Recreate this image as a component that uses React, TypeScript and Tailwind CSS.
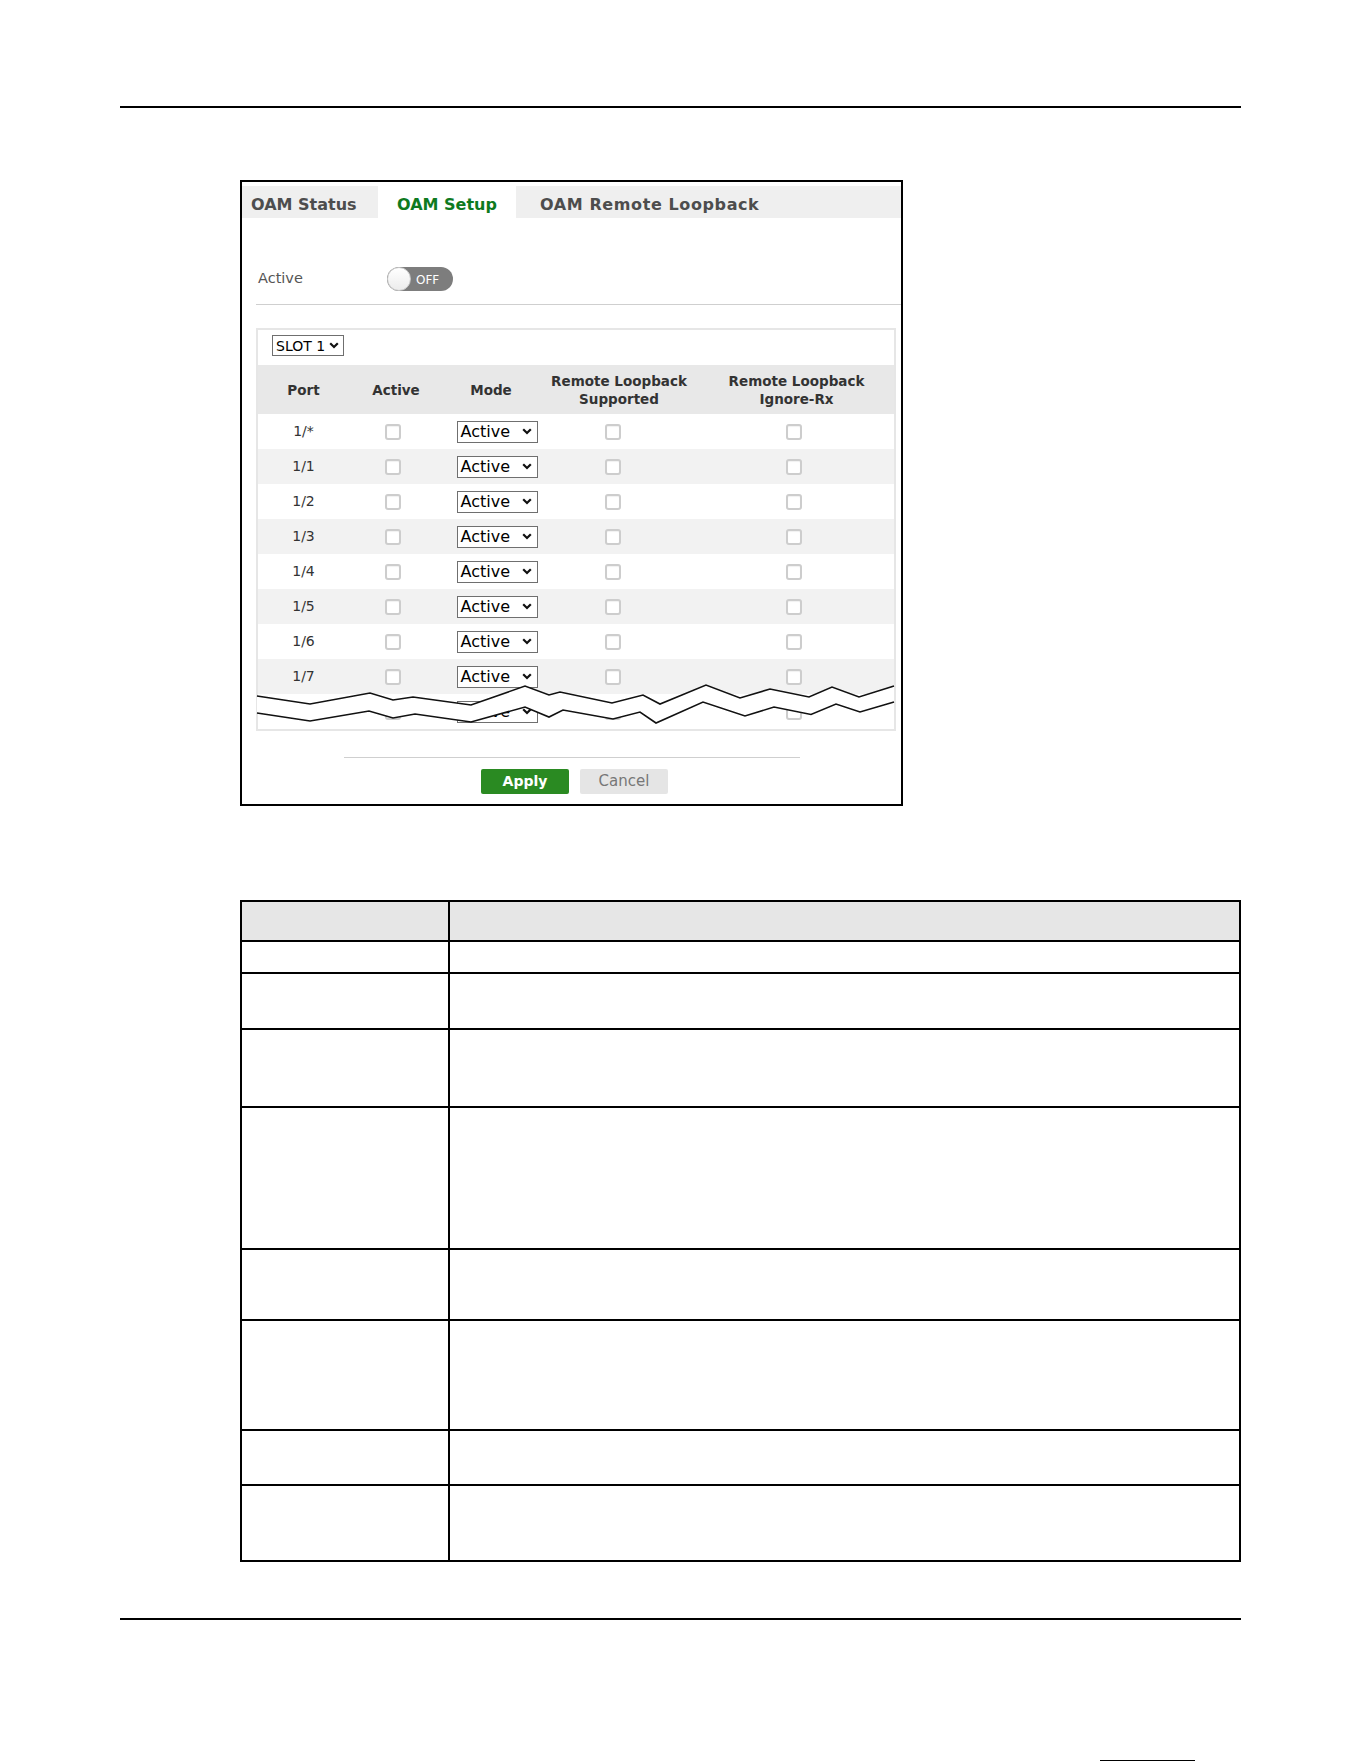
import React from 'react';

const UI_FONT = "font-['DejaVu_Sans',sans-serif]";

const PORTS = ['1/*', '1/1', '1/2', '1/3', '1/4', '1/5', '1/6', '1/7', '1/8'];

// 설명 표의 각 행 높이 (위쪽 테두리 포함)
const DESC_ROW_HEIGHTS = ['h-[32px]', 'h-[56px]', 'h-[78px]', 'h-[142px]', 'h-[71px]', 'h-[110px]', 'h-[55px]', 'h-[76px]'];

// 표가 잘려 나간 부분을 표시하는 지그재그 선 (페이지 좌표)
const BREAK_TOP: [number, number][] = [
  [257, 696], [310, 704], [370, 693], [393, 700], [413, 697], [471, 705], [525, 686], [549, 695],
  [560, 692], [612, 703], [643, 695], [660, 704], [706, 685], [740, 698], [770, 689], [809, 697],
  [832, 687], [859, 697], [894, 686],
];
const BREAK_BOTTOM: [number, number][] = [
  [257, 713], [310, 721], [369, 711], [393, 718], [415, 714], [471, 722], [525, 707], [549, 717],
  [563, 710], [613, 719], [640, 712], [656, 723], [703, 702], [745, 716], [774, 707], [811, 714.5],
  [836, 704], [860, 712], [894, 702],
];

const toPoints = (pts: [number, number][]) => pts.map(([x, y]) => `${x},${y}`).join(' ');

function Chevron() {
  return (
    <svg width="10" height="7" viewBox="0 0 10 7" className="shrink-0">
      <polyline points="1.2,1.2 5,5 8.8,1.2" fill="none" stroke="#111" strokeWidth="2.2" />
    </svg>
  );
}

function Checkbox() {
  return (
    <span className="block w-[16px] h-[16px] rounded-[3px] border-2 border-[#cdcdcd] bg-white shadow-[inset_0_1px_1px_rgba(0,0,0,0.06)]" />
  );
}

function ModeSelect() {
  return (
    <div className="flex items-center justify-between w-[81px] h-[22px] border border-[#6f6f6f] bg-white pl-[3px] pr-[5px]">
      <span className="text-[16px] leading-none text-black">Active</span>
      <Chevron />
    </div>
  );
}

function Toggle() {
  return (
    <div className="relative w-[66px] h-[24px] rounded-full bg-[#7d7d7d]">
      <span className="absolute left-0 top-0 w-[24px] h-[24px] rounded-full border border-[#c9c9c9] bg-gradient-to-b from-white to-[#ececec]" />
      <span className="absolute left-[29px] top-[1px] h-[24px] flex items-center text-[12px] text-white">OFF</span>
    </div>
  );
}

function PortTable() {
  return (
    <div className="relative ml-[14px] w-[640px] border-2 border-[#e6e6e6]">
      <div className="pt-[5px] pb-[9px] pl-[14px]">
        <div className="flex items-center justify-between w-[72px] h-[21px] border border-[#6f6f6f] bg-white pl-[3px] pr-[4px]">
          <span className="text-[14px] leading-none text-black">SLOT 1</span>
          <Chevron />
        </div>
      </div>

      <div className="grid grid-cols-[91px_88px_108px_148px_1fr] h-[49px] items-center bg-[#e8e8e8] text-[13.5px] font-bold leading-[18px] text-[#333] text-center">
        <span>Port</span>
        <span className="pl-[6px]">Active</span>
        <span>Mode</span>
        <span>
          Remote Loopback
          <br />
          Supported
        </span>
        <span className="pl-[6px]">
          Remote Loopback
          <br />
          Ignore-Rx
        </span>
      </div>

      {PORTS.map((port, i) => (
        <div
          key={port}
          className={`grid grid-cols-[91px_88px_108px_148px_1fr] h-[35px] items-center ${
            i % 2 === 1 ? 'bg-[#f2f2f2]' : 'bg-white'
          }`}
        >
          <span className="text-center text-[14px] text-[#333]">{port}</span>
          <span className="flex justify-center">
            <Checkbox />
          </span>
          <span className="flex justify-center pl-[12px]">
            <ModeSelect />
          </span>
          <span className="flex justify-center pr-[12px]">
            <Checkbox />
          </span>
          <span className="flex justify-center">
            <Checkbox />
          </span>
        </div>
      ))}

      <svg
        className="absolute left-[-2px] top-[-2px] pointer-events-none"
        width="640"
        height="403"
        viewBox="256 328 640 403"
      >
        <polygon points={`${toPoints(BREAK_TOP)} ${toPoints([...BREAK_BOTTOM].reverse())}`} fill="#fff" />
        <polyline points={toPoints(BREAK_TOP)} fill="none" stroke="#111" strokeWidth="1.6" />
        <polyline points={toPoints(BREAK_BOTTOM)} fill="none" stroke="#111" strokeWidth="1.6" />
      </svg>
    </div>
  );
}

function OamSetupPanel() {
  return (
    <div className={`ml-[240px] w-[663px] h-[626px] border-2 border-black bg-white pt-[4px] ${UI_FONT}`}>
      {/* 탭 */}
      <div className="flex h-[32px] bg-[#efefef] text-[16px] font-bold">
        <div className="w-[136px] flex items-center pt-[5px] pl-[9px] text-[#4d4d4d]">OAM Status</div>
        <div className="w-[138px] flex items-center justify-center pt-[5px] bg-white text-[#0e7a1f]">OAM Setup</div>
        <div className="flex items-center pt-[5px] pl-[24px] tracking-[0.6px] text-[#4d4d4d]">OAM Remote Loopback</div>
      </div>

      <div className="flex items-center mt-[49px] h-[24px] pl-[16px]">
        <span className="w-[129px] text-[14.5px] text-[#555]">Active</span>
        <Toggle />
      </div>

      <div className="mt-[13px] ml-[14px] h-px bg-[#cfcfcf]" />

      <div className="mt-[23px]">
        <PortTable />
      </div>

      <div className="mt-[26px] mx-auto w-[456px] h-px bg-[#cfcfcf]" />

      <div className="flex justify-center gap-[11px] mt-[11px] pl-[6px]">
        <button
          type="button"
          className="w-[88px] h-[25px] rounded-[2px] bg-[#2a8a22] text-[14px] font-bold text-white"
        >
          Apply
        </button>
        <button
          type="button"
          className="w-[88px] h-[25px] rounded-[2px] bg-[#e5e5e5] text-[15px] text-[#777]"
        >
          Cancel
        </button>
      </div>
    </div>
  );
}

function DescriptionTable() {
  return (
    <div className="ml-[240px] w-[1001px] border-2 border-black">
      <div className="flex h-[38px] bg-[#e6e6e6]">
        <div className="w-[208px] border-r-2 border-black" />
        <div className="flex-1" />
      </div>
      {DESC_ROW_HEIGHTS.map((h, i) => (
        <div key={i} className={`flex ${h} border-t-2 border-black`}>
          <div className="w-[208px] border-r-2 border-black" />
          <div className="flex-1" />
        </div>
      ))}
    </div>
  );
}

export default function App() {
  return (
    <div className="w-[1361px] h-[1761px] bg-white overflow-hidden">
      <div className="mt-[106px] ml-[120px] w-[1121px] h-[2px] bg-black" />

      <div className="mt-[72px]">
        <OamSetupPanel />
      </div>

      <div className="mt-[94px]">
        <DescriptionTable />
      </div>

      <div className="mt-[56px] ml-[120px] w-[1121px] h-[2px] bg-black" />

      <div className="mt-[140px] ml-[1100px] w-[95px] h-px bg-black" />
    </div>
  );
}
